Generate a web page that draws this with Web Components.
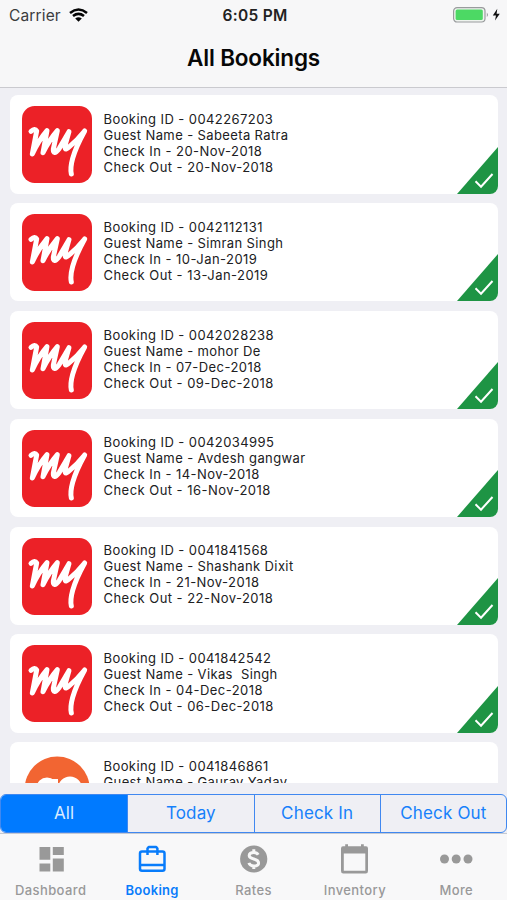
<!DOCTYPE html>
<html lang="en"><head><meta charset="utf-8"><title>All Bookings</title>
<style>html,body{margin:0;height:900px;overflow:hidden;background:#efeff4;font-family:Inter,"Liberation Sans",sans-serif}</style></head>
<body><bookings-app></bookings-app>
<script>
const define=(name,render)=>customElements.define(name,class extends HTMLElement{
  connectedCallback(){if(!this.shadowRoot)this.attachShadow({mode:'open'}).innerHTML=render(this)}
});

define('status-bar',()=>`<style>
:host{display:grid;grid-template-columns:1fr auto 1fr;align-items:center;height:30px;padding:0 6px 0 9px;font-size:15.5px;color:#222}
.l{display:flex;align-items:center;gap:8px;color:#3c3c3e;letter-spacing:.15px}.c{font-weight:600;letter-spacing:.3px}.r{display:flex;justify-content:flex-end;align-items:center}
svg{display:block}</style>
<div class="l"><span>Carrier</span><svg width="19" height="14" viewBox="0 0 19 14" fill="none" stroke="#050505" stroke-width="2.6"><path d="M1 4.9Q9.5-1.9 18 4.9M4 8.1Q9.5 3.8 15 8.1"/><path d="M6.2 10.5Q9.5 7.9 12.8 10.5L9.5 13.8Z" fill="#050505" stroke="none"/></svg></div>
<div class="c">6:05 PM</div>
<div class="r"><svg width="49" height="18" viewBox="0 0 49 18"><rect x="1.6" y="1.6" width="31.4" height="14.4" rx="3.5" fill="#eef3ee" stroke="#999b9d" stroke-width="1.2"/><rect x="3.6" y="3.6" width="27.2" height="10.4" rx="1.5" fill="#4cd964"/><path d="M34.8 6.5q2.4 2.3 0 4.6z" fill="#999b9d"/><path d="M45.3 2.8 40.8 9.6H44L43 14.5 47.8 7.8H44.6Z" fill="#111"/></svg></div>`);

define('nav-header',()=>`<style>
:host{display:block;box-sizing:border-box;height:88px;background:#f7f7f8;border-bottom:1px solid #cacacf}
h1{margin:0;text-align:center;font-size:22.5px;line-height:56px;font-weight:600;letter-spacing:-.15px;color:#070707}</style>
<status-bar></status-bar><h1><slot></slot></h1>`);

define('brand-logo',el=>`<style>:host{display:block;width:70px;height:77px}svg{display:block}</style>`+
(el.getAttribute('kind')==='go'?`<svg width="70" height="77" viewBox="0 0 70 77"><circle cx="35.2" cy="36" r="32.5" fill="#f26532"/><g fill="none" stroke="#fff" stroke-width="7"><circle cx="25" cy="35" r="7"/><path d="M32.5 26V43q0 7-11 6"/><circle cx="48" cy="35.5" r="8.5"/></g></svg>`
:`<svg width="70" height="77" viewBox="0 0 210 231"><rect width="210" height="231" rx="38" fill="#ec2127"/><path d="M27 76Q39 66 44 75L31 144Q50 103 75 74L63 140Q82 102 106 74L94 129Q93 151 112 127L141 77L131 112Q125 137 139 125Q165 104 188 75Q162 122 152 157Q144 186 148 204" fill="none" stroke="#fff" stroke-width="15" stroke-linejoin="round" stroke-linecap="round"/></svg>`));

define('confirmed-corner',()=>`<style>:host{display:block;width:41px;height:47px}svg{display:block}</style>
<svg width="41" height="47" viewBox="0 0 41 47"><path d="M41 0V47H0Z" fill="#1e9444"/><path d="M18.5 34.3 24 39.7 35.5 27" fill="none" stroke="#fff" stroke-width="2"/></svg>`);

define('booking-card',el=>{const a=n=>el.getAttribute(n);return `<style>
:host{display:flex;box-sizing:border-box;flex:none;height:98.5px;border-radius:8px;background:#fff;overflow:hidden;position:relative;padding:11px 0 0 12px;gap:11.5px}
.t{padding-top:4.8px;font-size:13px;line-height:16px;letter-spacing:.42px;color:#202022;white-space:pre}
.g{letter-spacing:.38px}.d{letter-spacing:.46px}
confirmed-corner{position:absolute;right:0;bottom:0}</style>
<brand-logo kind="${a('kind')||'my'}"></brand-logo><div class="t"><div>Booking ID - ${a('code')}</div><div class="g">Guest Name - ${a('guest')}</div>${a('in')?`<div class="d">Check In - ${a('in')}</div><div class="d">Check Out - ${a('out')}</div>`:''}</div>${a('in')?'<confirmed-corner></confirmed-corner>':''}`});

define('booking-list',()=>`<style>:host{display:flex;flex-direction:column;gap:9.35px;box-sizing:border-box;height:695px;padding:7.15px 9px 0 10px;overflow:hidden}</style><slot></slot>`);

define('segment-bar',()=>`<style>:host{display:grid;grid-template-columns:repeat(4,1fr);box-sizing:border-box;height:39px;margin-top:11px;border:1.4px solid #4088f0;border-radius:6px;overflow:hidden}</style><slot></slot>`);
define('segment-item',()=>`<style>:host{display:flex;justify-content:center;align-items:center;font-size:17px;letter-spacing:.15px;line-height:34px;padding-bottom:2px;color:#1680fb;border-left:1px solid #4088f0}
:host(:first-child){border-left:0}:host([active]){background:#007aff;color:#d9ebff}</style><slot></slot>`);

const icons={
dash:`<path d="M5.5 4h10.8v12.8H5.5zM18.8 4h11v8h-11zM5.5 20.4h10.8v8.1H5.5zM18.8 15.4h11v13.1h-11z"/>`,
bag:`<g fill="none" stroke="currentColor" stroke-width="2.5" stroke-linejoin="round"><rect x="4" y="8.5" width="24.5" height="19.2" rx="2"/><path d="M11.5 12V5.5l1.2-1.5h7.5l1.2 1.5V12M4 22h24.5"/></g>`,
rate:`<circle cx="16.7" cy="16" r="13.6"/><path d="M21.2 11.8Q19.9 9.5 16.7 9.5Q12.2 9.5 12.2 12.6Q12.2 15 16.7 16Q21.6 17.2 21.6 20Q21.6 23 16.9 23Q12.9 23 11.9 19.9M16.8 6.2V10M16.8 22.5V26" fill="none" stroke="#f8f8f8" stroke-width="3"/>`,
cal:`<path d="M5 3.2H7.2V1.2H10V3.2H23V1.2H25.8V3.2H28Q30 3.2 30 5.5V28Q30 30.5 27.7 30.5H5.3Q3 30.5 3 28V5.5Q3 3.2 5 3.2ZM5.8 10.4V27.8H27.3V10.4Z" fill-rule="evenodd"/>`,
more:`<circle cx="4.5" cy="16" r="4.5"/><circle cx="16.2" cy="16" r="4.5"/><circle cx="28" cy="16" r="4.5"/>`};
define('tab-item',el=>`<style>:host{display:flex;flex-direction:column;align-items:center;padding-top:9px;color:#999;font-size:13px;font-weight:500;letter-spacing:.4px}
:host([active]){color:#087cfb;font-weight:600;letter-spacing:.3px}svg{display:block;fill:currentColor}span{line-height:16px;margin-top:6px}</style>
<svg width="33" height="33" viewBox="0 0 33 33">${icons[el.getAttribute('icon')]}</svg><span><slot></slot></span>`);
define('tab-bar',()=>`<style>:host{display:grid;grid-template-columns:repeat(5,1fr);box-sizing:border-box;height:67px;background:#f8f8f9;border-top:1px solid #c5cad3}</style><slot></slot>`);

define('bookings-app',()=>`<style>:host{display:flex;flex-direction:column;height:900px;width:507px}</style>
<nav-header>All Bookings</nav-header>
<booking-list>
<booking-card code="0042267203" guest="Sabeeta Ratra" in="20-Nov-2018" out="20-Nov-2018"></booking-card>
<booking-card code="0042112131" guest="Simran Singh" in="10-Jan-2019" out="13-Jan-2019"></booking-card>
<booking-card code="0042028238" guest="mohor De" in="07-Dec-2018" out="09-Dec-2018"></booking-card>
<booking-card code="0042034995" guest="Avdesh gangwar" in="14-Nov-2018" out="16-Nov-2018"></booking-card>
<booking-card code="0041841568" guest="Shashank Dixit" in="21-Nov-2018" out="22-Nov-2018"></booking-card>
<booking-card code="0041842542" guest="Vikas  Singh" in="04-Dec-2018" out="06-Dec-2018"></booking-card>
<booking-card kind="go" code="0041846861" guest="Gaurav Yadav"></booking-card>
</booking-list>
<segment-bar><segment-item active>All</segment-item><segment-item>Today</segment-item><segment-item>Check In</segment-item><segment-item>Check Out</segment-item></segment-bar>
<tab-bar><tab-item icon="dash">Dashboard</tab-item><tab-item icon="bag" active>Booking</tab-item><tab-item icon="rate">Rates</tab-item><tab-item icon="cal">Inventory</tab-item><tab-item icon="more">More</tab-item></tab-bar>`);
</script></body></html>
